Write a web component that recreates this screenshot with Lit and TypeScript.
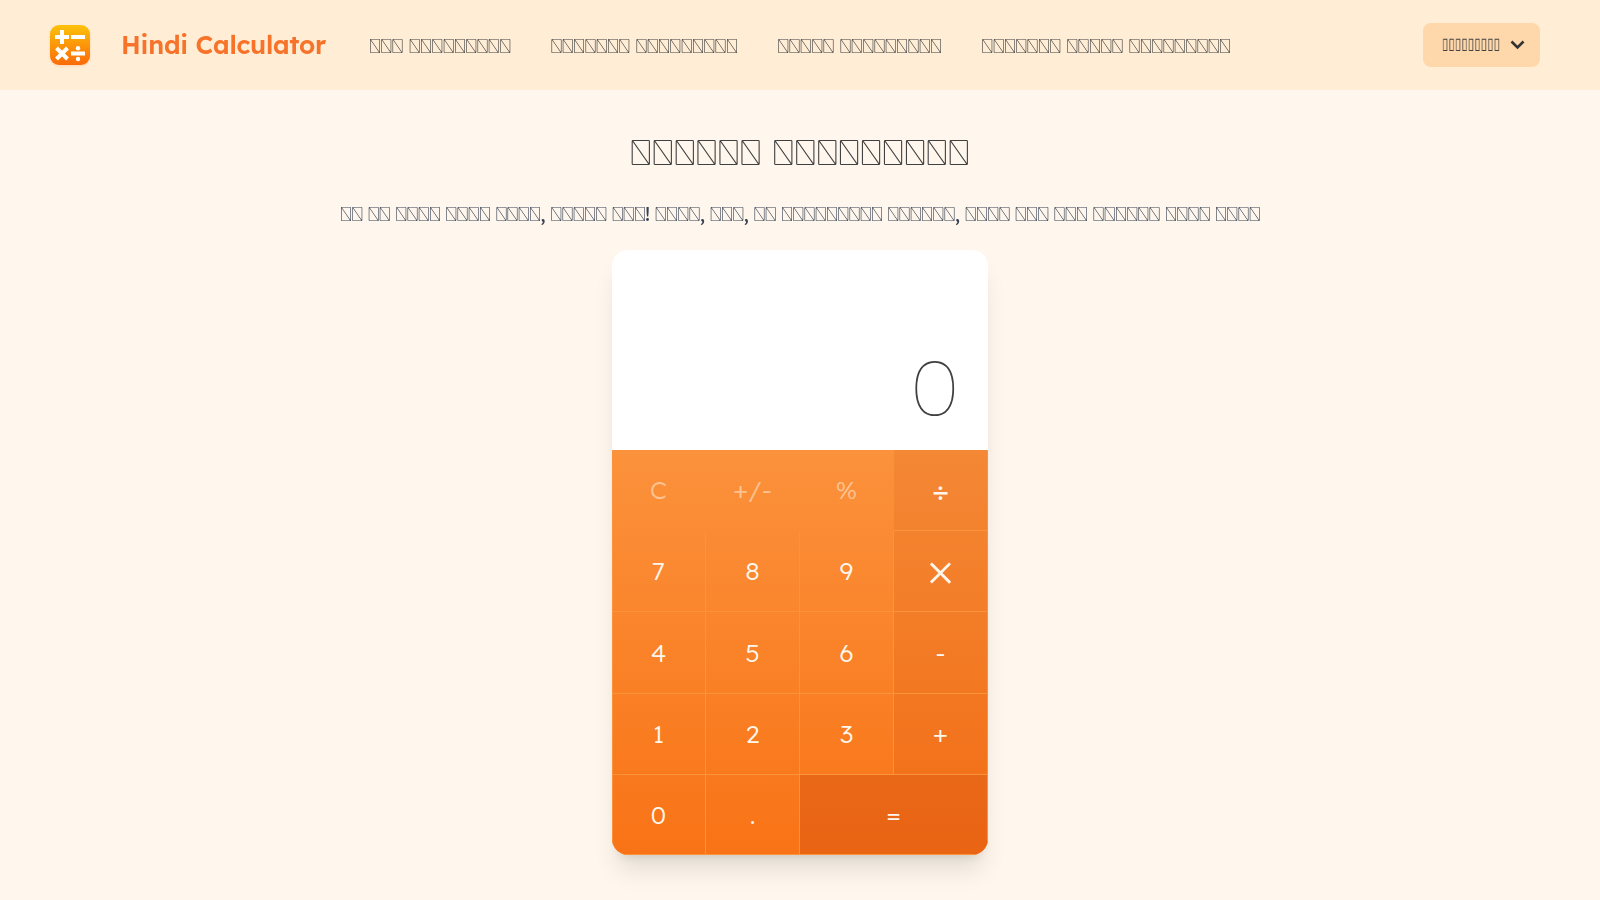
import { LitElement, html, css } from "lit";

// Each digit stands for a run of that many missing-glyph boxes.
const boxes = (counts: string) => counts.replace(/\d/g, (d) => "\uE123".repeat(Number(d)));

const NAV = ["3 9", "7 9", "5 9", "7 5 9"].map(boxes);
const TITLE = boxes("6 9");
const SUBTITLE = boxes("2 2 4 4 4, 5 3! 4, 3, 2 9 6, 4 3 3 6 4 4");
const KEYS: [string, string][] = [
  ["C", "fn"], ["+/-", "fn"], ["%", "fn"], ["÷", "op divide"],
  ["7", ""], ["8", ""], ["9", ""], ["×", "op times"],
  ["4", ""], ["5", ""], ["6", ""], ["-", "op"],
  ["1", ""], ["2", ""], ["3", ""], ["+", "op"],
  ["0", ""], [".", ""], ["=", "eq"],
];

class AppRoot extends LitElement {
  static styles = css`
    :host { display: block; height: 900px; overflow: hidden; background: #fff7ed; color: #404040; font-family: Lexend, "Lexend Deca", sans-serif; }
    * { box-sizing: border-box; }
    header { height: 90px; background: #ffedd5; display: flex; align-items: center; padding: 0 60px 0 50px; }
    .logo { width: 40px; height: 40px; flex: none; filter: drop-shadow(0 1px 1px rgba(249,115,22,.2)); }
    .brand { margin: 0 0 2px 31px; width: 204px; font-size: 25.6px; font-weight: 600; letter-spacing: -.2px; color: #f8732a; white-space: nowrap; will-change: transform; }
    nav { display: flex; gap: 40px; margin-left: 44px; font-size: 20px; letter-spacing: -.37px; font-weight: 600; white-space: nowrap; will-change: transform; }
    .lang { margin-left: auto; width: 117px; height: 44px; border-radius: 8px; background: #fed7aa; display: flex; align-items: center; padding-left: 19px; }
    .lang span { font: 16px "Noto Sans", sans-serif; width: 58px; white-space: nowrap; transform: scaleX(.718); transform-origin: left; margin-bottom: 4px; will-change: transform; }
    .lang svg { margin-left: 10px; }
    h1 { margin: 0; padding-top: 39px; text-align: center; font-size: 36px; line-height: 45px; font-weight: 400; letter-spacing: .025em; will-change: transform; }
    .sub { text-align: center; margin: 26px 0 0; font-size: 20px; letter-spacing: -.45px; line-height: 28px; color: #374151; height: 50px; white-space: nowrap; will-change: transform; }
    .card { width: 376px; margin: 0 auto; border-radius: 16px; overflow: hidden; background: #fff; box-shadow: 0 20px 25px -5px rgba(0,0,0,.1), 0 8px 10px -6px rgba(0,0,0,.1); }
    .display { height: 200px; display: flex; align-items: flex-end; justify-content: flex-end; padding: 0 30px 16px; font-size: 75px; font-weight: 100; }
    .keys { display: grid; grid-template-columns: repeat(4, 1fr); grid-template-rows: 81px 81px 82px 81px 80px; background: linear-gradient(#fb923c, #f97316); box-shadow: inset 1px 0 #fb923c; }
    .key { display: flex; align-items: center; justify-content: center; padding-bottom: 1px; color: #fff7ed; font-size: 25px; font-weight: 300; border-right: 1px solid #fb923c; border-bottom: 1px solid #fb923c; }
    .fn { color: rgba(255,247,237,.5); border-color: transparent; }
    .op { background: rgba(194,65,12,.12); }
    .divide { font-size: 28px; font-weight: 400; padding-bottom: 2px; }
    .times { font-size: 56px; font-weight: 200; line-height: 1; padding-bottom: 6px; }
    .eq { background: rgba(194,65,12,.3); grid-column: span 2; }
  `;
  render() {
    return html`
      <header>
        <svg class="logo" viewBox="0 0 40 40">
          <defs><linearGradient id="g" x1="0" y1="0" x2="0" y2="1"><stop offset="0" stop-color="#fdc20a" /><stop offset="1" stop-color="#fb6a09" /></linearGradient></defs>
          <rect width="40" height="40" rx="9" fill="url(#g)" />
          <g stroke="#fff" stroke-width="4" fill="none"><path d="M5 12h14M12 5v14M21 12h14M6.500 23l11 11M17.500 23l-11 11M21 28.500h14" /></g>
          <circle cx="28" cy="23.200" r="2.200" fill="#fff" /><circle cx="28" cy="34" r="2.200" fill="#fff" />
        </svg>
        <div class="brand">Hindi Calculator</div>
        <nav>${NAV.map((n) => html`<span>${n}</span>`)}</nav>
        <div class="lang"><span>${"▯".repeat(9)}</span><svg width="15" height="10" viewBox="0 0 15 10"><path d="M1.500 1.500l6 6 6-6" fill="none" stroke="#333" stroke-width="2.600" /></svg></div>
      </header>
      <h1>${TITLE}</h1>
      <p class="sub">${SUBTITLE}</p>
      <main class="card">
        <div class="display">0</div>
        <div class="keys">${KEYS.map(([k, c]) => html`<div class="key ${c}">${k}</div>`)}</div>
      </main>
    `;
  }
}
customElements.define("app-root", AppRoot);
